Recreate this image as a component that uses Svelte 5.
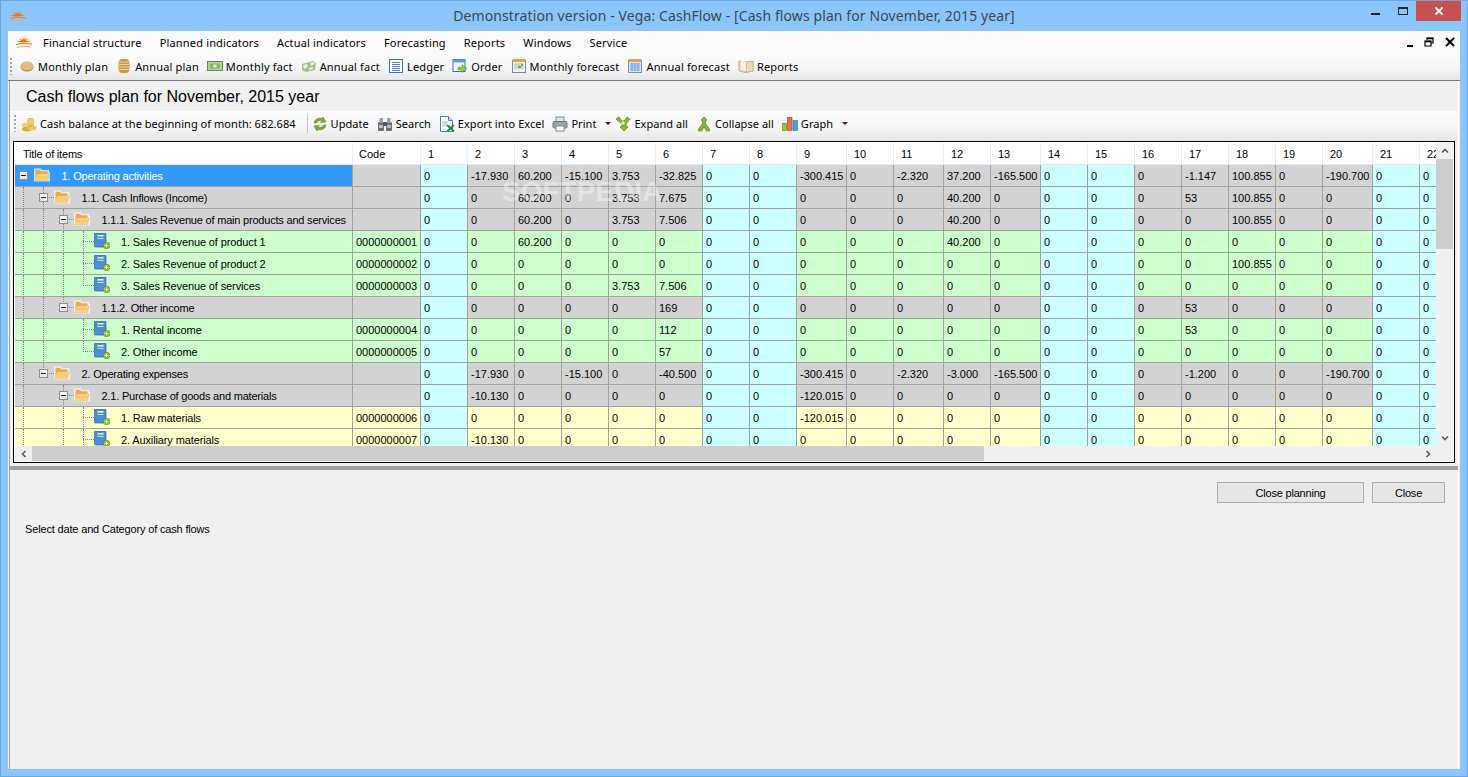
<script lang="ts">
  const days = Array.from({ length: 22 }, (_, i) => i + 1);
  const weekend = [1, 7, 8, 14, 15, 21, 22];

  const mainBar = [
    ["coin", "Monthly plan"],
    ["stack", "Annual plan"],
    ["note", "Monthly fact"],
    ["notes", "Annual fact"],
    ["ledger", "Ledger"],
    ["order", "Order"],
    ["calgreen", "Monthly forecast"],
    ["calblue", "Annual forecast"],
    ["book", "Reports"],
  ];

  // sparse values: day -> value, everything else is 0
  const rows = [
    { tree: "F", title: "1. Operating activities", kind: "sum", selected: true,
      v: { 2: "-17.930", 3: "60.200", 4: "-15.100", 5: "3.753", 6: "-32.825", 9: "-300.415", 11: "-2.320", 12: "37.200", 13: "-165.500", 17: "-1.147", 18: "100.855", 20: "-190.700" } },
    { tree: "|+", title: "1.1. Cash Inflows (Income)", kind: "sum",
      v: { 3: "60.200", 5: "3.753", 6: "7.675", 12: "40.200", 17: "53", 18: "100.855" } },
    { tree: "||+", title: "1.1.1. Sales Revenue of main products and services", kind: "sum",
      v: { 3: "60.200", 5: "3.753", 6: "7.506", 12: "40.200", 18: "100.855" } },
    { tree: "|||T", title: "1. Sales Revenue of product 1", code: "0000000001", kind: "in",
      v: { 3: "60.200", 12: "40.200" } },
    { tree: "|||T", title: "2. Sales Revenue of product 2", code: "0000000002", kind: "in",
      v: { 18: "100.855" } },
    { tree: "|||L", title: "3. Sales Revenue of services", code: "0000000003", kind: "in",
      v: { 5: "3.753", 6: "7.506" } },
    { tree: "||E", title: "1.1.2. Other income", kind: "sum",
      v: { 6: "169", 17: "53" } },
    { tree: "|| T", title: "1. Rental income", code: "0000000004", kind: "in",
      v: { 6: "112", 17: "53" } },
    { tree: "|| L", title: "2. Other income", code: "0000000005", kind: "in",
      v: { 6: "57" } },
    { tree: "|E", title: "2. Operating expenses", kind: "sum",
      v: { 2: "-17.930", 4: "-15.100", 6: "-40.500", 9: "-300.415", 11: "-2.320", 12: "-3.000", 13: "-165.500", 17: "-1.200", 20: "-190.700" } },
    { tree: "| +", title: "2.1. Purchase of goods and materials", kind: "sum",
      v: { 2: "-10.130", 9: "-120.015" } },
    { tree: "| |T", title: "1. Raw materials", code: "0000000006", kind: "out",
      v: { 9: "-120.015" } },
    { tree: "| |T", title: "2. Auxiliary materials", code: "0000000007", kind: "out",
      v: { 2: "-10.130" } },
  ];
</script>

{#snippet sun()}
  <svg class="ico" viewBox="0 0 16 16">
    <path d="M10 1.500 8.700 6 13 3.500 9.800 6.800 16 7 9.500 8.300H5L0 7.500l5.500-.8L3 4.500 6.800 6 6.500 3 8 5.500z" fill="#f0720a" />
    <path d="M0 10c5-1.500 11-1.500 16-.5v1.200C11 9.700 5 9.700 0 11.200z" fill="#f08a24" />
    <path d="M1 13c4-1.200 9-1.200 13-.5v1c-4-.8-9-.8-13 .5z" fill="#f2a860" />
  </svg>
{/snippet}

{#snippet icon(name)}
  <svg class="ico" viewBox="0 0 16 16">
    {#if name === "coin"}
      <ellipse cx="8" cy="9" rx="6.500" ry="4.500" fill="#a98440" />
      <ellipse cx="8" cy="8" rx="6.500" ry="4.500" fill="#e0bc78" />
    {:else if name === "stack"}
      <rect x="2.500" y="1" width="11" height="14" rx="4" fill="#c89848" />
      <path d="M3 4h10M3 6.500h10M3 9h10M3 11.500h10" stroke="#f0d494" stroke-width="1.200" />
    {:else if name === "note"}
      <rect x="0.500" y="3.500" width="15" height="9" fill="#b4d09c" stroke="#5f8a4a" />
      <rect x="3" y="5.500" width="10" height="5" fill="#8ab070" />
      <circle cx="8" cy="8" r="1.800" fill="#dcebcc" />
    {:else if name === "notes"}
      <path d="M1 6l11-3 3 2-1 7-9 2-4-2z" fill="#9cc08a" />
      <path d="M2 7l4-1 1 3-4 2zM9 5l4-1 1 2-4 2zM8 10l4-1v2l-4 1z" fill="#e8f0e0" />
    {:else if name === "ledger"}
      <rect x="1.500" y="1.500" width="13" height="13" fill="#fff" stroke="#2b78b8" />
      <path d="M4 4.500h8M4 6.500h8M4 8.500h8M4 10.500h8M4 12.500h8" stroke="#5a7fa8" />
    {:else if name === "order"}
      <rect x="1" y="1.500" width="12" height="12" fill="#fff" stroke="#2b78b8" />
      <rect x="1" y="1.500" width="12" height="3" fill="#5aa0dc" />
      <path d="M6 9h4V6.500l5 4-5 4V12H6z" fill="#8cc63c" stroke="#5a8c1c" stroke-width="0.500" />
    {:else if name === "calgreen"}
      <rect x="1.500" y="2.500" width="13" height="12" fill="#f4f4f4" stroke="#808890" />
      <rect x="1.500" y="1" width="13" height="3" fill="#e8a050" />
      <path d="M3 6h10M3 8h10M3 10h10M5 5v7M8 5v7M11 5v7" stroke="#a0a8b4" stroke-width="0.600" />
      <rect x="7" y="8" width="3" height="2" fill="#6cae3c" />
      <rect x="10" y="6" width="2" height="2" fill="#6cae3c" />
    {:else if name === "calblue"}
      <rect x="1.500" y="2.500" width="13" height="12" fill="#dce8f8" stroke="#6c90b8" />
      <rect x="1.500" y="1" width="13" height="3" fill="#e8a050" />
      <path d="M3 6h10M3 8h10M3 10h10M3 12h10M5 5v8M8 5v8M11 5v8" stroke="#5a8ac8" stroke-width="0.700" />
    {:else if name === "book"}
      <path d="M1 3l7 1 7-1v10l-7 1.500L1 13z" fill="#f0dcb4" stroke="#b89a68" stroke-width="0.800" />
      <path d="M8 4v10.500" stroke="#8aa0c0" />
      <path d="M3 2l5 2v9l-5-2z" fill="#fbf2dc" />
    {:else if name === "pile"}
      <ellipse cx="6" cy="13" rx="5" ry="2.500" fill="#d8a83c" />
      <ellipse cx="11" cy="12" rx="4.500" ry="2.500" fill="#eec660" />
      <rect x="6" y="2" width="7" height="9" rx="3" fill="#e0b040" />
      <path d="M6.500 4h6M6.500 6h6M6.500 8h6" stroke="#f8e4a0" />
      <ellipse cx="4" cy="9" rx="3.500" ry="2" fill="#f0cc6c" />
    {:else if name === "update"}
      <path d="M2 7c.5-3.500 4-5.500 7.500-4.500L11 1l3 5-5.500.5L10 5C7.500 4 5.500 5 4.500 7z" fill="#70b030" stroke="#4a8018" stroke-width="0.500" />
      <path d="M14 9c-.5 3.500-4 5.500-7.500 4.500L5 15l-3-5 5.500-.5L6 11c2.500 1 4.500 0 5.500-2z" fill="#70b030" stroke="#4a8018" stroke-width="0.500" />
    {:else if name === "search"}
      <rect x="1" y="6" width="6" height="9" rx="1" fill="#6c7078" />
      <rect x="9" y="6" width="6" height="9" rx="1" fill="#6c7078" />
      <rect x="2.500" y="2" width="3.500" height="5" fill="#9a9ea6" />
      <rect x="10" y="2" width="3.500" height="5" fill="#9a9ea6" />
      <rect x="6" y="6" width="4" height="4" fill="#50545c" />
      <rect x="2" y="9" width="4" height="3" fill="#b8bcc4" />
      <rect x="10" y="9" width="4" height="3" fill="#b8bcc4" />
    {:else if name === "excel"}
      <path d="M1.500 .500h8l4 4v11h-12z" fill="#fff" stroke="#4a80b8" />
      <path d="M9.500 .500v4h4" fill="#cfe0f2" stroke="#4a80b8" />
      <path d="M3 6h6M3 8h5M3 10h4" stroke="#9cb8d8" />
      <path d="M8 9l7 6.500M15 9l-7 6.500" stroke="#2f8a38" stroke-width="2" />
    {:else if name === "print"}
      <rect x="4" y="1" width="8" height="5" fill="#dce6f2" stroke="#6c88a8" />
      <rect x="1" y="5.500" width="14" height="6.500" rx="1" fill="#a0a4ac" stroke="#70747c" />
      <rect x="4" y="10" width="8" height="5" fill="#fff" stroke="#6c88a8" />
    {:else if name === "expand"}
      <path d="M1 3l3-2 3 4h2l3-4 3 2-4 5v2l2 1-4 4-4-4 2-1V8z" fill="#86b82c" stroke="#54801a" stroke-width="0.700" />
      <circle cx="8" cy="7" r="1.800" fill="#e4f0c4" />
    {:else if name === "collapse"}
      <path d="M8 1l3 3-1.500 1v3l4 5v2h-3L8 11l-2.500 4h-3v-2l4-5V5L5 4z" fill="#86b82c" stroke="#54801a" stroke-width="0.700" />
    {:else if name === "graph"}
      <rect x=".500" y="7.500" width="4" height="7" fill="#9cc820" stroke="#5a8010" stroke-width="0.600" />
      <rect x="5.500" y="1.500" width="4.500" height="13" fill="#ee6a50" stroke="#a83c2c" stroke-width="0.600" />
      <rect x="11" y="4.500" width="4.500" height="10" fill="#48a4e0" stroke="#2a6c9c" stroke-width="0.600" />
    {/if}
  </svg>
{/snippet}

{#snippet folder()}
  <svg class="ico" viewBox="0 0 16 16">
    <path d="M0 1.500h7l1 1.500h7v2h1v9.500H0z" fill="#fff" opacity=".7" />
    <path d="M1.500 13V2.800h4.500l1 1.500H13.500V7H3L1.500 13z" fill="#eeaa48" />
    <path d="M1 13.500 3 7h12.500L13.500 13.500z" fill="#fbd286" stroke="#eeb05a" stroke-width="0.500" />
    <path d="M3 9.500h11M2.500 11h11" stroke="#f3b964" stroke-width="0.600" />
  </svg>
{/snippet}

{#snippet leaf()}
  <svg class="ico" viewBox="0 0 16 16">
    <rect x="0.500" y="0" width="11.500" height="14" rx="1" fill="#4a8ed4" stroke="#2c69a8" stroke-width="0.700" />
    <rect x="3.500" y="2" width="6" height="1.500" fill="#fff" />
    <rect x="3.500" y="5" width="6" height="1" fill="#d4e6f8" />
    <circle cx="12.500" cy="12.500" r="3.300" fill="#8cc02c" stroke="#5c8a14" stroke-width="0.600" />
    <path d="M12.500 10.800v3.400M10.800 12.500h3.400" stroke="#fff" stroke-width="1.100" />
  </svg>
{/snippet}

{#snippet chevron(dir)}
  <svg class="chev chev-{dir}" viewBox="0 0 8 8">
    <path d="M1 5.500 4 2.500 7 5.500" fill="none" stroke="#606060" stroke-width="1.700" />
  </svg>
{/snippet}

<div class="window">
  <header class="titlebar">
    <div class="tb-logo">{@render sun()}</div>
    <div class="tb-title">Demonstration version - Vega: CashFlow - [Cash flows plan for November, 2015 year]</div>
    <div class="tb-buttons">
      <span class="wb"><i class="wb-min"></i></span>
      <span class="wb"><i class="wb-max"></i></span>
      <span class="wb wb-close">
        <svg viewBox="0 0 10 10" width="10" height="10"><path d="M1.500 1.500 8.500 8.500M8.500 1.500 1.500 8.500" stroke="#fff" stroke-width="1.800" /></svg>
      </span>
    </div>
  </header>

  <div class="client">
    <nav class="menu">
      <span class="menu-logo">{@render sun()}</span>
      <span>Financial structure</span>
      <span>Planned indicators</span>
      <span>Actual indicators</span>
      <span>Forecasting</span>
      <span>Reports</span>
      <span>Windows</span>
      <span>Service</span>
      <div class="mdi">
        <i class="mdi-min"></i>
        <svg viewBox="0 0 10 10" width="10" height="10"><path d="M3 3V1h6v5H7M1 4h6v5H1z" fill="none" stroke="#000" stroke-width="1.200" /><path d="M3 1.500h6M1 4.500h6" stroke="#000" stroke-width="1.500" /></svg>
        <svg viewBox="0 0 10 10" width="10" height="10"><path d="M1 1 9 9M9 1 1 9" stroke="#000" stroke-width="2" /></svg>
      </div>
    </nav>

    <div class="toolbar main-bar">
      <i class="grip"></i>
      {#each mainBar as [ic, label]}
        <span class="tool">{@render icon(ic)}{label}</span>
      {/each}
    </div>

    <main class="child">
      <h1>Cash flows plan for November, 2015 year</h1>

      <div class="toolbar doc-bar">
        <i class="grip"></i>
        <span class="tool balance">{@render icon("pile")}Cash balance at the beginning of month: 682.684</span>
        <i class="sep"></i>
        <span class="tool">{@render icon("update")}Update</span>
        <span class="tool">{@render icon("search")}Search</span>
        <span class="tool">{@render icon("excel")}Export into Excel</span>
        <span class="tool">{@render icon("print")}Print<i class="caret print-caret"></i></span>
        <span class="tool">{@render icon("expand")}Expand all</span>
        <span class="tool">{@render icon("collapse")}Collapse all</span>
        <span class="tool">{@render icon("graph")}Graph<i class="caret"></i></span>
      </div>

      <section class="frame">
        <div class="frame-top">
          <div class="viewport">
            <div class="row head">
              <div class="cell h-title">Title of items</div>
              <div class="cell h-code">Code</div>
              {#each days as d}
                <div class="cell h-day">{d}</div>
              {/each}
            </div>
            {#each rows as r}
              <div class="row">
                <div class="cell title {r.kind}" class:selected={r.selected}>
                  {#each r.tree.split("") as g}
                    <span class="guide g-{{ "|": "v", " ": "n", T: "t", L: "l", F: "f", "+": "p", E: "e" }[g]}">
                      {#if "F+E".includes(g)}<i class="box"></i>{/if}
                    </span>
                  {/each}
                  <span class="node">
                    {#if r.code}{@render leaf()}{:else}{@render folder()}{/if}
                  </span>
                  <span class="label" class:leaf-label={r.code}>{r.title}</span>
                </div>
                <div class="cell code {r.kind}">{r.code ?? ""}</div>
                {#each days as d}
                  <div class="cell num {weekend.includes(d) ? 'wk' : r.kind}">{r.v[d] ?? "0"}</div>
                {/each}
              </div>
            {/each}
            <div class="watermark">SOFTPEDIA</div>
          </div>
          <div class="vscroll">
            <span class="arrow">{@render chevron("up")}</span>
            <div class="vthumb"></div>
            <div class="spacer"></div>
            <span class="arrow">{@render chevron("down")}</span>
          </div>
        </div>
        <div class="hscroll">
          <span class="arrow">{@render chevron("left")}</span>
          <div class="hthumb"></div>
          <div class="spacer"></div>
          <span class="arrow">{@render chevron("right")}</span>
          <div class="corner"></div>
        </div>
      </section>

      <div class="splitter"></div>

      <div class="lower">
        <div class="actions">
          <button class="btn-plan">Close planning</button>
          <button class="btn-close">Close</button>
        </div>
        <p class="hint">Select date and Category of cash flows</p>
      </div>
    </main>
  </div>
</div>

<style>
  :global(body) {
    margin: 0;
    overflow: hidden;
  }

  .window {
    box-sizing: border-box;
    width: 1468px;
    height: 777px;
    display: flex;
    flex-direction: column;
    padding: 0 7px 7px;
    background: #8ac6fb;
    border: 1px solid #6fa6dc;
    font-family: "Liberation Sans", sans-serif;
    font-size: 11px;
    color: #000;
  }

  .ico {
    width: 16px;
    height: 16px;
    flex: none;
    display: block;
  }

  .titlebar {
    height: 30px;
    flex: none;
    display: grid;
    grid-template-columns: 1fr auto 1fr;
    margin: 0 -7px;
  }
  .tb-logo {
    padding: 7px 0 0 9px;
  }
  .tb-title {
    font-family: "Noto Sans", sans-serif;
    font-size: 14px;
    letter-spacing: 0.1px;
    line-height: 30px;
    color: #3c4650;
  }
  .tb-buttons {
    display: flex;
    justify-content: flex-end;
    align-items: flex-start;
    padding-right: 6px;
  }
  .wb {
    width: 27px;
    height: 19px;
    display: flex;
    align-items: center;
    justify-content: center;
  }
  .wb-min {
    width: 9px;
    height: 2px;
    margin-top: 7px;
    background: #222;
  }
  .wb-max {
    width: 8px;
    height: 5px;
    border: 1px solid #222;
    border-top-width: 2px;
  }
  .wb-close {
    width: 45px;
    height: 20px;
    background: #c75050;
  }

  .client {
    flex: 1;
    min-height: 0;
    display: flex;
    flex-direction: column;
    background: #f0f0f0;
  }

  .menu {
    box-sizing: border-box;
    height: 24px;
    flex: none;
    display: flex;
    align-items: center;
    gap: 18px;
    padding: 0 0 2px 8px;
    background: #fafafa;
    font-family: "Noto Sans", sans-serif;
    font-size: 11px;
    letter-spacing: 0.17px;
  }
  .menu-logo {
    margin-right: -7px;
  }
  .mdi {
    margin-left: auto;
    display: flex;
    align-items: center;
    gap: 11px;
    padding-right: 5px;
  }
  .mdi-min {
    width: 6px;
    height: 2px;
    margin-top: 7px;
    background: #000;
  }

  .toolbar {
    display: flex;
    align-items: center;
    box-sizing: border-box;
    font-family: "Noto Sans", sans-serif;
    font-size: 11px;
    background: linear-gradient(#fcfcfc, #f4f4f4 60%, #e6e6e6);
  }
  .main-bar {
    height: 26px;
    flex: none;
    gap: 8px;
    padding: 0 0 3px 2px;
    border-bottom: 1px solid #7a7a7a;
    letter-spacing: 0.17px;
  }
  .grip {
    width: 2px;
    height: 17px;
    flex: none;
    background: repeating-linear-gradient(#a8a8a8 0 2px, transparent 2px 4px);
  }
  .main-bar .grip {
    margin-right: -1px;
  }
  .doc-bar .grip {
    margin-right: -3px;
  }
  .tool {
    display: flex;
    align-items: center;
    gap: 3px;
    white-space: nowrap;
  }

  .child {
    flex: 1;
    min-height: 0;
    display: flex;
    flex-direction: column;
    margin: 0 1px 0 1px;
    border-left: 1px solid #a0a0a0;
    border-right: 1px solid #fff;
  }
  h1 {
    height: 30px;
    margin: 0;
    padding-left: 16px;
    flex: none;
    font-size: 16px;
    font-weight: 400;
    line-height: 31px;
  }
  .doc-bar {
    height: 30px;
    flex: none;
    gap: 8px;
    padding: 0 0 5px 4px;
    letter-spacing: 0.04px;
  }
  .balance {
    margin-right: 3px;
  }
  .sep {
    width: 1px;
    height: 19px;
    background: #c4c4c4;
    margin-right: -4px;
  }
  .caret {
    width: 0;
    height: 0;
    border: 3px solid transparent;
    border-top: 3px solid #222;
    border-bottom: 0;
    margin-left: 6px;
  }
  .print-caret {
    margin-right: -4px;
  }

  .frame {
    height: 322px;
    margin: 0 3px 0 3px;
    flex: none;
    box-sizing: border-box;
    display: flex;
    flex-direction: column;
    border: 1px solid #000;
    padding: 1px 1px 0 1px;
    background: #fff;
  }
  .frame-top {
    height: 303px;
    display: flex;
    flex: none;
  }
  .viewport {
    position: relative;
    flex: 1;
    min-width: 0;
    overflow: hidden;
  }
  .row {
    display: grid;
    grid-template-columns: 338px 68px repeat(8, 47px) 50px 47px 50px 47px 50px repeat(6, 47px) 50px 47px 47px;
    height: 22px;
  }
  .cell {
    box-sizing: border-box;
    height: 22px;
    line-height: 22px;
    border-right: 1px solid #a0a0a0;
    border-bottom: 1px solid #a0a0a0;
    white-space: nowrap;
    overflow: hidden;
  }
  .head .cell {
    border-right: 1px solid #e6eefa;
    border-bottom: 1px solid #dfe8f6;
    background: #fff;
    line-height: 22px;
  }
  .h-title {
    padding-left: 8px;
    letter-spacing: -0.2px;
  }
  .h-code {
    padding-left: 6px;
  }
  .h-day {
    padding-left: 7px;
  }
  .num,
  .code {
    padding-left: 3px;
  }
  .sum {
    background: #d3d3d3;
  }
  .in {
    background: #ccffcc;
  }
  .out {
    background: #ffffcc;
  }
  .wk {
    background: #ccffff;
  }

  .title {
    display: flex;
  }
  .title.selected {
    background: #3399ff;
    color: #fff;
  }
  .guide {
    position: relative;
    width: 20px;
    height: 22px;
    flex: none;
  }
  .guide::before,
  .guide::after {
    content: "";
    position: absolute;
    left: 8px;
  }
  .g-v::before,
  .g-t::before,
  .g-p::before {
    top: 0;
    height: 22px;
    border-left: 1px dotted #808080;
  }
  .g-l::before,
  .g-e::before {
    top: 0;
    height: 11px;
    border-left: 1px dotted #808080;
  }
  .g-f::before {
    top: 11px;
    height: 11px;
    border-left: 1px dotted #808080;
  }
  .g-t::after,
  .g-l::after,
  .g-f::after,
  .g-p::after,
  .g-e::after {
    top: 10px;
    width: 11px;
    border-top: 1px dotted #808080;
  }
  .box {
    position: absolute;
    z-index: 1;
    left: 4px;
    top: 6px;
    box-sizing: border-box;
    width: 9px;
    height: 9px;
    border: 1px solid #8a8f98;
    background: linear-gradient(#fff, #e2e4ea);
  }
  .box::after {
    content: "";
    position: absolute;
    left: 1px;
    top: 3px;
    width: 5px;
    height: 1px;
    background: #222;
  }
  .node {
    margin: 2px 0 0 -1px;
  }
  .label {
    margin-left: 11.500px;
    letter-spacing: -0.2px;
  }
  .leaf-label {
    margin-left: 11px;
    letter-spacing: -0.12px;
  }

  .watermark {
    position: absolute;
    left: 487px;
    top: 34px;
    font-size: 28px;
    line-height: 30px;
    font-weight: 700;
    color: rgba(255, 255, 255, 0.38);
    pointer-events: none;
  }

  .vscroll {
    width: 17px;
    flex: none;
    display: flex;
    flex-direction: column;
    background: #f0f0f0;
  }
  .vthumb {
    height: 90px;
    flex: none;
    background: #cdcdcd;
  }
  .spacer {
    flex: 1;
  }
  .arrow {
    width: 17px;
    height: 16px;
    flex: none;
    display: flex;
    align-items: center;
    justify-content: center;
  }
  .chev {
    width: 8px;
    height: 8px;
  }
  .chev-down {
    transform: rotate(180deg);
  }
  .chev-left {
    transform: rotate(-90deg);
  }
  .chev-right {
    transform: rotate(90deg);
  }

  .hscroll {
    height: 15px;
    flex: none;
    display: flex;
    background: #f0f0f0;
  }
  .hthumb {
    width: 952px;
    flex: none;
    background: #cdcdcd;
  }
  .corner {
    width: 17px;
    flex: none;
  }

  .splitter {
    height: 4px;
    margin-top: 3px;
    flex: none;
    background: #a0a0a0;
  }

  .lower {
    flex: 1;
    min-height: 0;
  }
  .actions {
    display: flex;
    justify-content: flex-end;
    gap: 8px;
    padding: 12px 13px 0 0;
  }
  button {
    height: 21px;
    padding: 0;
    border: 1px solid #adadad;
    background: #e6e6e6;
    font: inherit;
    font-size: 11px;
    letter-spacing: -0.2px;
    color: #000;
  }
  .btn-plan {
    width: 147px;
  }
  .btn-close {
    width: 73px;
  }
  .hint {
    margin: 19px 0 0 15px;
    line-height: 14px;
    letter-spacing: -0.16px;
  }
</style>
